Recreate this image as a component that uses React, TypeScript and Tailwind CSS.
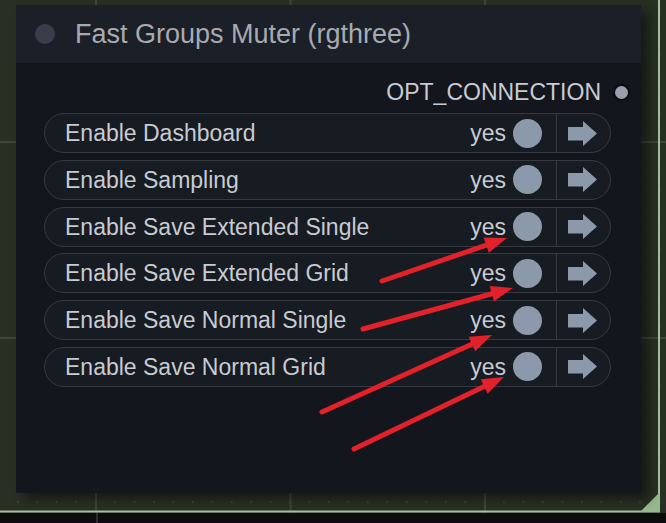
import React from 'react';

const groups = [
  'Enable Dashboard',
  'Enable Sampling',
  'Enable Save Extended Single',
  'Enable Save Extended Grid',
  'Enable Save Normal Single',
  'Enable Save Normal Grid',
];

// annotation arrows drawn over the screenshot: [tailX, tailY, tipX, tipY]
const arrows: [number, number, number, number][] = [
  [382, 281, 507, 238],
  [363, 329, 513, 288],
  [322, 412, 492, 335],
  [354, 449, 504, 377],
];

function RedArrow({ a }: { a: [number, number, number, number] }) {
  const [x1, y1, x2, y2] = a;
  const len = Math.hypot(x2 - x1, y2 - y1);
  const ux = (x2 - x1) / len;
  const uy = (y2 - y1) / len;
  const head = 22;
  const half = 8;
  const bx = x2 - ux * head;
  const by = y2 - uy * head;
  const pts = `${x2},${y2} ${bx - uy * half},${by + ux * half} ${bx + uy * half},${by - ux * half}`;
  return (
    <g>
      <line x1={x1} y1={y1} x2={bx + ux * 4} y2={by + uy * 4} stroke="#e3212a" strokeWidth={5} strokeLinecap="round" />
      <polygon points={pts} fill="#e3212a" />
    </g>
  );
}

function ArrowIcon() {
  return (
    <svg width="29" height="25" viewBox="0 0 29 25">
      <path d="M0 6 H15 V0 L29 12.5 L15 25 V19.5 H0 Z" fill="#8c99aa" />
    </svg>
  );
}

function GroupRow({ label }: { label: string }) {
  return (
    <div className="flex h-[40px] items-center rounded-full border border-[#353a43] bg-[#171b22]">
      <span className="flex-1 whitespace-nowrap pl-[20px] text-[23px] leading-[28px] text-[#c8cbd2]">{label}</span>
      <span className="text-[23px] leading-[28px] text-[#c8cbd2]">yes</span>
      <span className="ml-[7px] h-[29px] w-[29px] rounded-full bg-[#8c99aa]" />
      <span className="ml-[14px] w-px self-stretch bg-[#353a43]" />
      <span className="flex w-[53px] items-center pl-[11px]">
        <ArrowIcon />
      </span>
    </div>
  );
}

function Canvas() {
  return (
    <svg className="absolute inset-0" width="666" height="523" viewBox="0 0 666 523">
      <defs>
        <pattern id="minor" x="-2.5" y="-5" width="19.45" height="19.45" patternUnits="userSpaceOnUse">
          <rect x="0" y="0.5" width="1.5" height="1.5" fill="#48513f" />
        </pattern>
      </defs>
      <rect width="666" height="523" fill="#283024" />
      <rect width="666" height="523" fill="url(#minor)" />
      {[96, 290.5, 485].map((x) => (
        <rect key={x} x={x - 1} y={0} width={2} height={523} fill="#3e4739" />
      ))}
      {[142, 338].map((y) => (
        <rect key={y} x={0} y={y - 1} width={666} height={2} fill="#3e4739" />
      ))}
      <rect x="0" y="513" width="666" height="10" fill="#0b0c0b" />
      <rect x="96" y="513" width="2" height="10" fill="#2c302b" />
      <rect x="0" y="510.5" width="660" height="2" fill="#a7c09c" />
      <rect x="658" y="0" width="2" height="512" fill="#a7c09c" />
      <polygon points="640,512 660,512 660,492" fill="#97b88c" />
    </svg>
  );
}

export default function App() {
  return (
    <div
      className="relative h-[523px] w-[666px] overflow-hidden"
      style={{ fontFamily: '"Liberation Sans", Arial, sans-serif' }}
    >
      <Canvas />
      <div className="relative ml-[16px] mt-[5px] flex h-[488px] w-[625px] flex-col bg-[#13161c] shadow-[8px_6px_10px_rgba(0,0,0,0.45)]">
        <div className="flex h-[58px] items-center gap-[20px] bg-[#1b1f27] pl-[19px]">
          <span className="h-[20px] w-[20px] rounded-full bg-[#3a3e4a]" />
          <span className="whitespace-nowrap text-[27px] leading-[32px] text-[#a7abb1]">Fast Groups Muter (rgthree)</span>
        </div>
        <div className="flex flex-col pt-[16px]">
          <div className="flex h-[26px] items-center justify-end gap-[12px] pr-[11px]">
            <span className="whitespace-nowrap text-[23px] leading-[28px] text-[#c8cbd2]">OPT_CONNECTION</span>
            <span className="box-border h-[17px] w-[17px] rounded-full border-2 border-[#0b0d11] bg-[#9c9eab]" />
          </div>
          <div className="ml-[28px] mt-[8px] flex w-[567px] flex-col gap-[6.8px]">
            {groups.map((g) => (
              <GroupRow key={g} label={g} />
            ))}
          </div>
        </div>
      </div>
      <svg className="pointer-events-none absolute inset-0" width="666" height="523" viewBox="0 0 666 523">
        {arrows.map((a, i) => (
          <RedArrow key={i} a={a} />
        ))}
      </svg>
    </div>
  );
}
